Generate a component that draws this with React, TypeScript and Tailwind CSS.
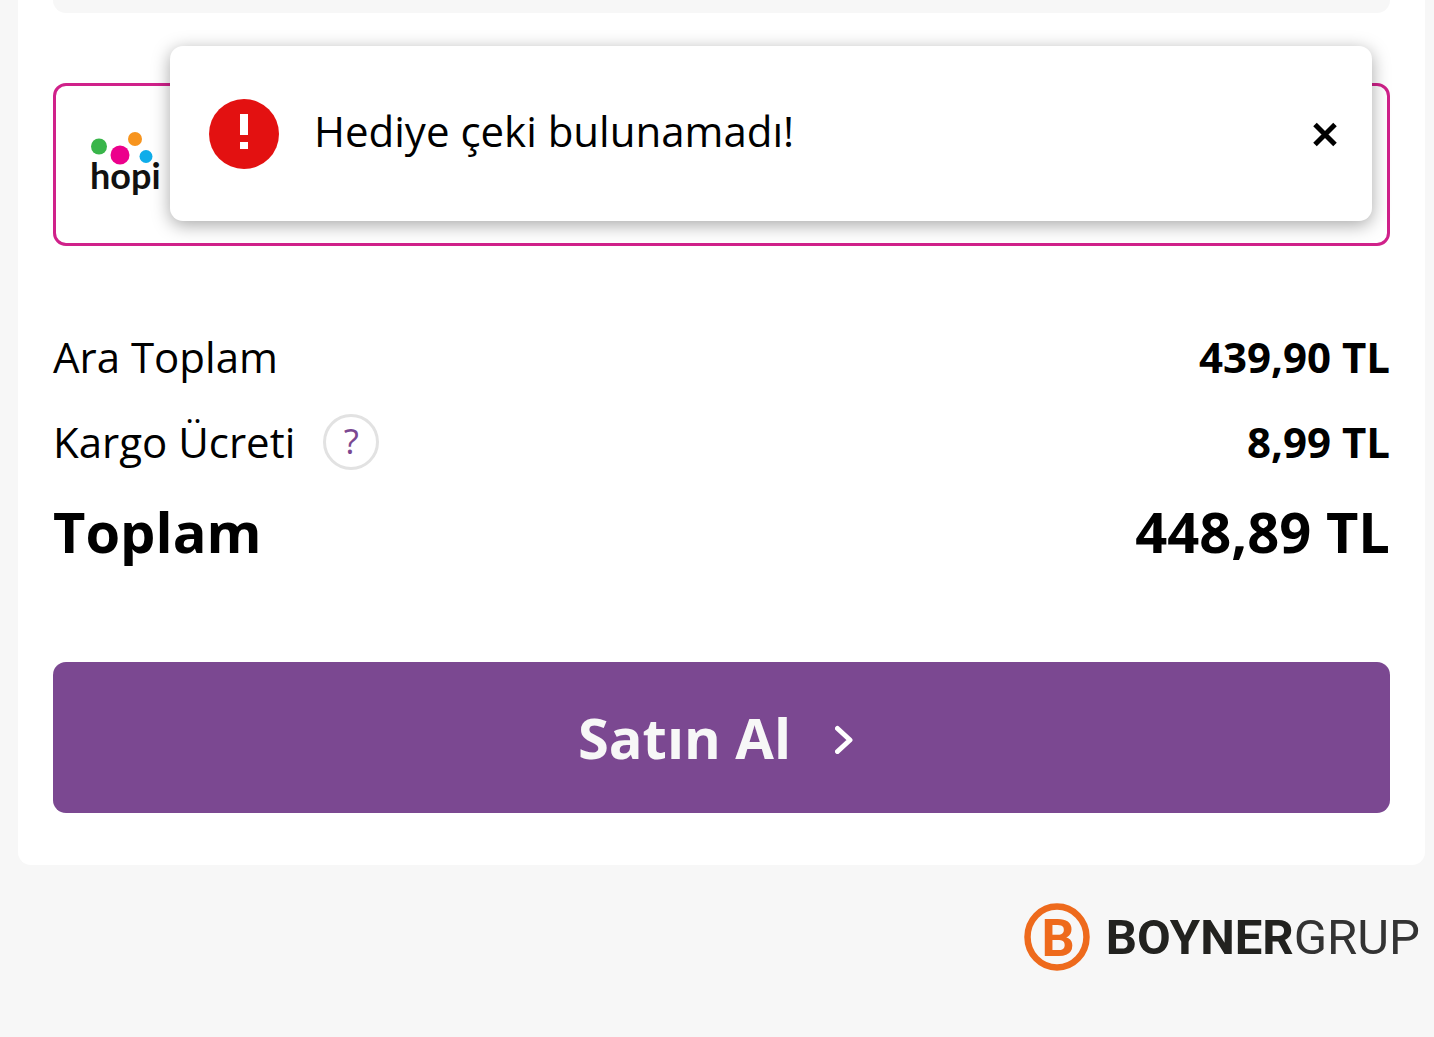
import { ReactNode } from "react";

const HopiLogo = () => (
  <svg width="74" height="66" viewBox="0 0 74 66" role="img" aria-label="hopi">
    <circle cx="8" cy="14.5" r="8" fill="#39b54a" />
    <circle cx="44" cy="7" r="7" fill="#f7941e" />
    <circle cx="29" cy="23" r="9.5" fill="#ec008c" />
    <circle cx="55" cy="24.5" r="6.5" fill="#0fadea" />
    <text
      x="-1"
      y="57"
      className="fill-[#111111] font-['Lato',sans-serif] text-[36px] font-bold"
    >
      hopi
    </text>
  </svg>
);

const BoynerLogo = () => (
  <div className="flex items-center gap-4">
    <svg width="66" height="68" viewBox="0 0 66 68" aria-hidden="true">
      <ellipse
        cx="33"
        cy="34"
        rx="29.5"
        ry="30.5"
        fill="none"
        stroke="#ee6a1c"
        strokeWidth="6.5"
      />
      <text
        x="34"
        y="53"
        textAnchor="middle"
        className="fill-[#ee6a1c] font-['Roboto',sans-serif] text-[52px] font-bold"
      >
        B
      </text>
    </svg>
    <p className="pt-0.5 font-['Roboto',sans-serif] text-[49px] leading-[66px] text-[#333333]">
      <span className="font-bold text-[#22221f]">BOYNER</span>
      <span>GRUP</span>
    </p>
  </div>
);

const Alert = () => (
  <div
    role="alert"
    className="absolute top-[46px] right-[62px] left-[170px] flex h-[175px] items-center rounded-[13px] bg-white pr-[34px] pl-[39px] shadow-[0_4px_18px_rgba(0,0,0,0.35)]"
  >
    <svg width="70" height="70" viewBox="0 0 70 70" aria-hidden="true">
      <circle cx="35" cy="35" r="35" fill="#e31111" />
      <path d="M31 15h8v21h-8zM31 43h8v7h-8z" fill="#fff" />
    </svg>
    <p className="ml-[35px] flex-1 pb-1.5 text-[42px] leading-[56px]">
      Hediye çeki bulunamadı!
    </p>
    <button type="button" aria-label="Kapat">
      <svg width="26" height="26" viewBox="0 0 26 26" aria-hidden="true">
        <path
          d="M3 3.5 23 23.5M23 3.5 3 23.5"
          stroke="#000"
          strokeWidth="5"
          strokeLinecap="butt"
        />
      </svg>
    </button>
  </div>
);

const SummaryRow = ({
  label,
  value,
}: {
  label: ReactNode;
  value: string;
}) => (
  <div className="flex items-center justify-between text-[42px] leading-[56px]">
    <dt className="flex items-center gap-7">{label}</dt>
    <dd className="font-bold">{value}</dd>
  </div>
);

export default function App() {
  return (
    <div className="relative min-h-screen bg-[#f7f7f7] font-['Open_Sans',sans-serif] text-black">
      <main className="mr-[9px] ml-[18px] rounded-b-[13px] bg-white px-[35px] pb-[52px]">
        <div className="h-[13px] rounded-b-[13px] bg-[#f7f7f7]" />

        <section className="mt-[70px] flex h-[163px] items-center rounded-[13px] border-3 border-[#d0218a] px-[35px]">
          <HopiLogo />
        </section>

        <dl className="mt-[83px]">
          <SummaryRow label="Ara Toplam" value="439,90 TL" />
          <div className="mt-[29px]">
            <SummaryRow
              label={
                <>
                  Kargo Ücreti
                  <button
                    type="button"
                    aria-label="Kargo ücreti bilgisi"
                    className="flex size-14 items-center justify-center rounded-full border-3 border-[#e2e2e2] pb-0.5 text-[35px] text-[#7b4891]"
                  >
                    ?
                  </button>
                </>
              }
              value="8,99 TL"
            />
          </div>
          <div className="mt-[23px] flex items-center justify-between text-[56px] leading-[76px] font-bold">
            <dt>Toplam</dt>
            <dd>448,89 TL</dd>
          </div>
        </dl>

        <button
          type="button"
          className="mt-[93px] flex h-[151px] w-full items-center justify-center gap-11 rounded-[13px] bg-[#7b4891] pr-3 text-[56px] font-bold text-[#f7f7f7]"
        >
          <span className="pb-0.5">Satın Al</span>
          <svg width="18" height="32" viewBox="0 0 18 32" aria-hidden="true">
            <path
              d="M2.5 6.5 15 18 2.5 29.5"
              fill="none"
              stroke="#fff"
              strokeWidth="5"
              strokeLinecap="round"
              strokeLinejoin="round"
            />
          </svg>
        </button>
      </main>

      <footer className="flex justify-end pt-[38px] pr-3.5">
        <BoynerLogo />
      </footer>

      <Alert />
    </div>
  );
}
